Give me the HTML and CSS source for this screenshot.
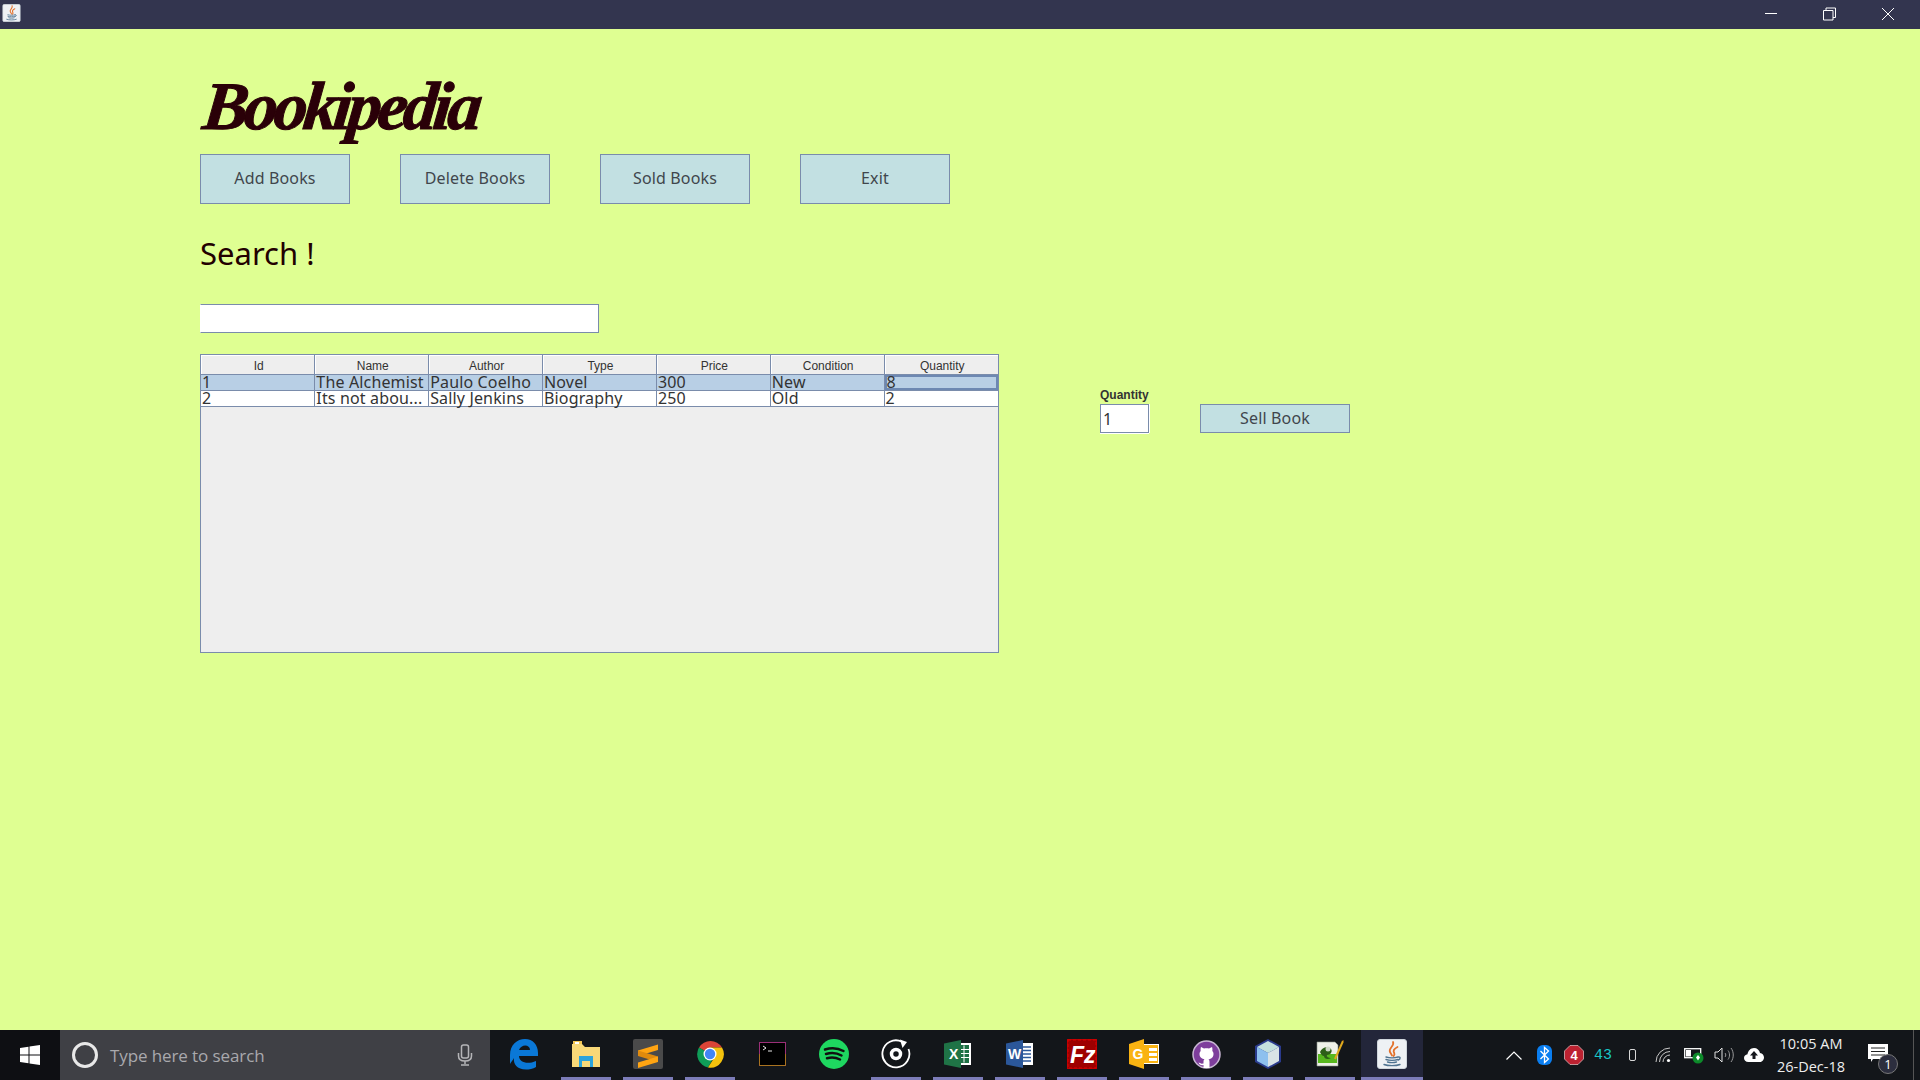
FILE: index.html
```html
<!DOCTYPE html>
<html lang="en">
<head>
<meta charset="utf-8">
<title>Bookipedia</title>
<link rel="stylesheet" href="styles.css">
</head>
<body>
<svg class="defs" width="0" height="0" aria-hidden="true">
  <symbol id="java" viewBox="0 0 30 30">
    <rect x="0.5" y="0.5" width="29" height="29" rx="2.5" fill="#eef1f4" stroke="#cfd6dc"/>
    <path d="M16 3c2 4-5 6-3 10 .5 1 1.500 2 2 3.500M20.500 8c-4 2-4.500 4-3.300 6 .5 1 .3 2-.5 3" fill="none" stroke="#e2702a" stroke-width="1.800" stroke-linecap="round"/>
    <path d="M9 18c3 1 9 1 12 0M9 20.500c3 1 9 1 12 0M10.500 23c3 .8 6 .8 9 0M7 25.500c4 1.500 12 1.500 16 0M21 18c2.500-.5 3 2 .3 3" fill="none" stroke="#4f7390" stroke-width="1.400" stroke-linecap="round"/>
  </symbol>
</svg>

<header class="titlebar">
  <svg class="app-icon" width="19" height="18"><use href="#java"/></svg>
  <div class="win-controls">
    <svg class="win-btn" width="59" height="29" viewBox="0 0 59 29"><path d="M24 13.500h12" stroke="#fff" fill="none"/></svg>
    <svg class="win-btn" width="59" height="29" viewBox="0 0 59 29"><path d="M23.500 10.500h9.500v9.500h-9.500zM26 10.500v-2.500h9.500v9.500h-2.500" stroke="#fff" fill="none"/></svg>
    <svg class="win-btn" width="59" height="29" viewBox="0 0 59 29"><path d="M23 8l12 12M35 8l-12 12" stroke="#fff" fill="none"/></svg>
  </div>
</header>

<main class="app">
  <div class="brand"><h1 class="brand-text">Bookipedia</h1></div>
  <nav class="actions">
    <button class="btn btn-lg">Add Books</button>
    <button class="btn btn-lg">Delete Books</button>
    <button class="btn btn-lg">Sold Books</button>
    <button class="btn btn-lg">Exit</button>
  </nav>
  <h2 class="search-title">Search !</h2>
  <input class="search-input" type="text" aria-label="Search">
  <section class="work">
    <div class="table-wrap">
      <table class="books">
        <thead>
          <tr><th>Id</th><th>Name</th><th>Author</th><th>Type</th><th>Price</th><th>Condition</th><th>Quantity</th></tr>
        </thead>
        <tbody>
          <tr class="selected"><td>1</td><td>The Alchemist</td><td>Paulo Coelho</td><td>Novel</td><td>300</td><td>New</td><td class="focus">8</td></tr>
          <tr><td>2</td><td>Its not abou...</td><td>Sally Jenkins</td><td>Biography</td><td>250</td><td>Old</td><td>2</td></tr>
        </tbody>
      </table>
    </div>
    <aside class="sell">
      <label class="qty-label" for="qty">Quantity</label>
      <div class="sell-row">
        <input class="qty-input" id="qty" type="text" value="1">
        <button class="btn btn-sm">Sell Book</button>
      </div>
    </aside>
  </section>
</main>

<footer class="taskbar">
  <div class="start">
    <svg width="20" height="20" viewBox="0 0 20 20"><path d="M0 3l8.500-1.200v7.700H0zM9.500 1.600L20 0v9.500H9.500zM0 10.500h8.500v7.700L0 17zM9.500 10.500H20V20L9.500 18.400z" fill="#fff"/></svg>
  </div>
  <div class="searchbox">
    <svg class="cortana" width="28" height="28" viewBox="0 0 28 28"><circle cx="14" cy="14" r="11.500" fill="none" stroke="#e8e8e8" stroke-width="3"/></svg>
    <span class="search-hint">Type here to search</span>
    <svg class="mic" width="16" height="22" viewBox="0 0 16 22"><rect x="4.500" y="1" width="7" height="13" rx="2" fill="none" stroke="#b5b5b8" stroke-width="1.500"/><path d="M1.500 9v3c0 3 2.500 5 6.500 5s6.500-2 6.500-5V9M8 17v3M4 21h8" fill="none" stroke="#b5b5b8" stroke-width="1.500"/></svg>
  </div>
  <div class="apps">
    <div class="slot">
      <svg width="30" height="32" viewBox="0 0 30 32"><path d="M1 17C1 7 8 1 16 1c8 0 13 6 13 14v3H10c0 6 8 9 17 5v6c-3 2-7 2.500-10 2.500C8 31.500 4 26 5 20 4 22 2 24 1 26zM10 12h11c0-6-9-6-11 0z" fill="#0a78d7"/></svg>
    </div>
    <div class="slot on">
      <svg width="28" height="26" viewBox="0 0 28 26"><path d="M0 3h10l3 3h15v20H0z" fill="#f8d878"/><path d="M1 0h9v3H1z" fill="#f3c653"/><path d="M3 1h4v2H3z" fill="#fff"/><path d="M7 15h14v11h-3v-6h-8v6H7z" fill="#2ba3dc"/></svg>
    </div>
    <div class="slot on">
      <svg width="30" height="30" viewBox="0 0 30 30"><rect width="30" height="30" rx="2" fill="#4a4a4a"/><path d="M5 11.500L25 5.500V11L5 17z" fill="#ffa412"/><path d="M5 11.500L25 17.500V23L5 17z" fill="#e08a0c"/><path d="M25 17.500V23L5 29V23.500z" fill="#ffa412"/></svg>
    </div>
    <div class="slot on">
      <svg width="28" height="28" viewBox="0 0 28 28"><path d="M14 14L3 7.500A13.500 13.500 0 0 1 26 7.500H14z" fill="#db4437"/><path d="M14 14L3 7.500A13.500 13.500 0 0 0 12 27.500L18 17z" fill="#0f9d58"/><path d="M14 7.500h12A13.500 13.500 0 0 1 12 27.500l7-11z" fill="#f4c20d"/><circle cx="14" cy="14" r="6.500" fill="#fff"/><circle cx="14" cy="14" r="5.200" fill="#4285f4"/></svg>
    </div>
    <div class="slot">
      <svg width="27" height="24" viewBox="0 0 27 24"><rect x="0.500" y="0.500" width="26" height="23" fill="#000" stroke="#9b2f77"/><path d="M0.500 12v11.500h26V12" fill="none" stroke="#a97320"/><path d="M4 4l3 2-3 2M9 9h4" fill="none" stroke="#e8e8e8"/></svg>
    </div>
    <div class="slot">
      <svg width="30" height="30" viewBox="0 0 30 30"><circle cx="15" cy="15" r="15" fill="#1ed760"/><path d="M6 10.500c6-2 13-1.500 18.500 1.500M7 15c5-1.500 11-1 15.500 1.500M8 19.300c4.500-1.200 9-.8 13 1.200" fill="none" stroke="#111" stroke-width="2.500" stroke-linecap="round"/></svg>
    </div>
    <div class="slot on">
      <svg width="30" height="30" viewBox="0 0 30 30"><path d="M21 2.800A13.500 13.500 0 1 0 27.500 10" fill="none" stroke="#fff" stroke-width="1.800"/><path d="M19 .5l7 2.500-4.500 6z" fill="#fff"/><circle cx="15" cy="15" r="4.500" fill="none" stroke="#fff" stroke-width="3.500"/></svg>
    </div>
    <div class="slot on">
      <svg width="28" height="28" viewBox="0 0 28 28"><path d="M14 3h13v22H14z" fill="#fff"/><path d="M16 5h9v18h-9z" fill="#1d7044"/><path d="M20 5.500v17M16 9.500h9M16 13.500h9M16 17.500h9" stroke="#fff" fill="none"/><path d="M0 3.500L17 0v28L0 24.500z" fill="#1f7346"/><text class="logo-letter" x="5" y="19" fill="#fff">X</text></svg>
    </div>
    <div class="slot on">
      <svg width="28" height="28" viewBox="0 0 28 28"><path d="M14 3h13v22H14z" fill="#fff"/><path d="M17 7h8M17 10.500h8M17 14h8M17 17.500h8M17 21h8" stroke="#2b579a" stroke-width="1.500" fill="none"/><path d="M0 3.500L17 0v28L0 24.500z" fill="#2b579a"/><text class="logo-letter" x="2" y="19" fill="#fff">W</text></svg>
    </div>
    <div class="slot on">
      <svg width="30" height="30" viewBox="0 0 30 30"><rect width="30" height="30" fill="#bf0000"/><path d="M1 1h28v28H1z" fill="#9e0000" stroke="#d80000" stroke-dasharray="3 2"/><text class="logo-fz" x="3" y="24" fill="#fff">Fz</text></svg>
    </div>
    <div class="slot on">
      <svg width="30" height="30" viewBox="0 0 30 30"><path d="M13 5h17v20H13z" fill="#fff"/><path d="M14 6h15v18H14z" fill="#f9b312"/><path d="M20 9h8v3h-8zM20 14h8v3h-8zM20 19h8v3h-8z" fill="#fff"/><path d="M0 5L15 0v30L0 25z" fill="#f9b312"/><text class="logo-letter" x="3.500" y="20" fill="#fff">G</text></svg>
    </div>
    <div class="slot on">
      <svg width="29" height="29" viewBox="0 0 29 29"><circle cx="14.500" cy="14.500" r="13.500" fill="#7e3e9c" stroke="#c9b8d4" stroke-width="1.500"/><path d="M9 7l3 1.500c1.500-.4 3.500-.4 5 0L20 7c.5 1.500.5 3 .3 4 1 1 1.200 2 1.200 3 0 3.500-2.500 5-5 5.300.7.600 1 1.400 1 2.500V28h-6v-3c-2.500.6-4-.3-5-2.500 1 .2 2 1 3 1.200l2-.2v-2c0-1 .3-1.800 1-2.400-2.500-.3-5-1.800-5-5.100 0-1 .3-2 1.200-3-.2-1-.2-2.500.3-4z" fill="#fff"/></svg>
    </div>
    <div class="slot on">
      <svg width="28" height="30" viewBox="0 0 28 30"><path d="M14 0L27 7v16l-13 7-13-7V7z" fill="#2a3a8c"/><path d="M14 2L25 8 14 14 3 8z" fill="#c4e0de"/><path d="M3 8l11 6v14L3 22z" fill="#8ec0ee"/><path d="M25 8L14 14v14l11-6z" fill="#d8e2e6"/></svg>
    </div>
    <div class="slot on">
      <svg width="28" height="28" viewBox="0 0 28 28"><path d="M1 2h18l3 3v21H1z" fill="#eef0e8" stroke="#8c9488" stroke-width=".6"/><path d="M2 14h19v9H2z" fill="#58b81f"/><path d="M4 12c2-5 8-6 11-3 2 3-1 6-4 6-1 2 2 3 4 3-3 2-7 1-7-2-2 0-3-2-4-4z" fill="#2d5f18"/><circle cx="12" cy="9" r="2.500" fill="#cfd8c8"/><path d="M19 19L27 1" stroke="#e0a91d" stroke-width="2"/><path d="M27 1l1-1" stroke="#70480f" stroke-width="2"/></svg>
    </div>
    <div class="slot on active">
      <svg width="30" height="30"><use href="#java"/></svg>
    </div>
  </div>
  <div class="tray">
    <div class="tray-item"><svg width="16" height="9" viewBox="0 0 16 9"><path d="M.5 8.500L8 1l7.500 7.500" fill="none" stroke="#fff" stroke-width="1.200"/></svg></div>
    <div class="tray-item"><svg width="15" height="20" viewBox="0 0 15 20"><rect width="15" height="20" rx="6" fill="#0a7ef0"/><path d="M3.500 6l8 8L7.500 17.500v-15L11.500 6l-8 8" fill="none" stroke="#fff" stroke-width="1.300"/></svg></div>
    <div class="tray-item"><svg width="20" height="20" viewBox="0 0 20 20"><path d="M6 .5h8L19.500 6v8L14 19.500H6L.5 14V6z" fill="#bd2231" stroke="#e8c8c8" stroke-width=".7"/><text class="stop-num" x="10" y="15" fill="#fff">4</text></svg></div>
    <div class="tray-item tray-temp">43</div>
    <div class="tray-item"><svg width="7" height="12" viewBox="0 0 7 12"><rect x=".5" y=".5" width="6" height="11" rx="1.500" fill="none" stroke="#d8d8d8"/></svg></div>
    <div class="tray-item tray-wide"><svg width="16" height="16" viewBox="0 0 16 16"><path d="M1 15A14 14 0 0 1 15 1M4.500 15A10.500 10.500 0 0 1 15 4.500M8 15A7 7 0 0 1 15 8" fill="none" stroke="#c8c8c8"/><circle cx="13.500" cy="13.500" r="1.600" fill="#fff"/></svg></div>
    <div class="tray-item"><svg width="20" height="18" viewBox="0 0 20 18"><rect x=".7" y="2.700" width="16" height="9" fill="none" stroke="#fff" stroke-width="1.300"/><rect x="2" y="4" width="5" height="6.500" fill="#fff"/><circle cx="14" cy="12" r="5.500" fill="#0d8a2a"/><path d="M14 9l2 2.500-2 3-2-3z" fill="#fff"/></svg></div>
    <div class="tray-item"><svg width="20" height="16" viewBox="0 0 20 16"><path d="M1 5h3l4-4v14l-4-4H1z" fill="none" stroke="#e0e0e0"/><path d="M11 6c1 1 1 3 0 4M14 3.500c2 2.500 2 6.500 0 9M17 1c3 4 3 10 0 14" fill="none" stroke="#9a9a9a"/></svg></div>
    <div class="tray-item"><svg width="20" height="14" viewBox="0 0 20 14"><path d="M4.500 14C1.500 14 0 12 0 10c0-2 1.500-3.500 3.500-3.700C4 3 6.500 0 10 0c3 0 5.500 2 6 5 2.500.3 4 2.500 4 4.500S18.500 14 16 14z" fill="#fff"/><path d="M10 3l4 4.500h-2.500V11h-3V7.500H6z" fill="#15171c"/></svg></div>
    <div class="clock"><span>10:05 AM</span><span>26-Dec-18</span></div>
    <div class="notify">
      <svg width="20" height="18" viewBox="0 0 20 18"><path d="M0 0h20v15H5l-2 3v-3H0z" fill="#fff"/><path d="M3 4h14M3 7.500h14M3 11h14" stroke="#222" stroke-width="1" fill="none"/></svg>
      <span class="badge">1</span>
    </div>
  </div>
</footer>
</body>
</html>
```

FILE: styles.css
```css
* { box-sizing: border-box; }
html, body { margin: 0; height: 100%; }
body {
  display: flex;
  flex-direction: column;
  height: 1080px;
  overflow: hidden;
  background: #dfff92;
  font-family: "Noto Sans", sans-serif;
  color: #200;
}
.defs { position: absolute; }

/* window title bar */
.titlebar {
  flex: 0 0 29px;
  display: flex;
  align-items: flex-start;
  justify-content: space-between;
  background: #33354f;
  padding: 0 2px;
}
.app-icon { margin-top: 4px; }
.win-controls { display: flex; }
.win-btn { display: block; }

/* application body */
.app {
  flex: 1;
  display: flex;
  flex-direction: column;
  padding-left: 200px;
}
.brand {
  height: 125px;
  display: flex;
  align-items: flex-end;
}
.brand-text {
  margin: 0 0 13px;
  font-family: "Liberation Serif", serif;
  font-style: italic;
  font-weight: 700;
  font-size: 68px;
  line-height: 70px;
  letter-spacing: -4.3px;
  color: #2a0008;
  -webkit-text-stroke: 1px #2a0008;
  transform: skewX(-6deg);
  transform-origin: left bottom;
}
.actions { display: flex; gap: 50px; }
.btn {
  background: #c2e0e2;
  border: 1px solid #7a8cab;
  border-radius: 0;
  color: #40464c;
  font-family: "Noto Sans", sans-serif;
  font-size: 16px;
  letter-spacing: .15px;
  padding: 0 0 2px;
}
.btn-lg { width: 150px; height: 50px; }
.btn-sm { width: 150px; height: 29px; padding: 0 0 1px; }
.search-title {
  margin: 28px 0 0;
  font-size: 31px;
  line-height: 42px;
  font-weight: 400;
  color: #200;
}
.search-input {
  margin-top: 30px;
  width: 399px;
  height: 29px;
  background: #fff;
  border: 1px solid #7a8cab;
  border-left-color: #fff;
  outline: none;
}
.work {
  margin-top: 21px;
  display: flex;
  align-items: flex-start;
}
.table-wrap {
  width: 799px;
  height: 299px;
  background: #eee;
  border: 1px solid #7a8cab;
}
.books {
  width: 100%;
  table-layout: fixed;
  border-collapse: collapse;
}
.books th {
  height: 19px;
  padding: 3px 0 0 2px;
  background: #eee;
  border: 1px solid #7a8cab;
  border-top: 0;
  font-family: "Liberation Sans", sans-serif;
  font-size: 12px;
  line-height: 14px;
  font-weight: 400;
  color: #333;
  box-shadow: inset 1px 1px 0 #fff;
}
.books th:first-child { border-left: 0; }
.books th:last-child { border-right: 0; }
.books td {
  height: 16px;
  padding: 0 1px;
  background: #fff;
  border: 1px solid #7a8cab;
  font-size: 16px;
  line-height: 14px;
  letter-spacing: .15px;
  color: #333;
  white-space: nowrap;
}
.books td:first-child { border-left: 0; }
.books td:last-child { border-right: 0; }
.books .selected td { background: #b8cfe5; }
.books .selected .focus { box-shadow: inset 0 0 0 2px #6d88b2; padding-left: 2px; }
.sell {
  margin: 34px 0 0 101px;
  display: flex;
  flex-direction: column;
}
.qty-label {
  font-family: "Liberation Sans", sans-serif;
  font-size: 12px;
  line-height: 15px;
  font-weight: 700;
  color: #333;
}
.sell-row { display: flex; gap: 51px; margin-top: 1px; }
.qty-input {
  width: 49px;
  height: 29px;
  padding: 0 0 0 2px;
  background: #fff;
  border: 1px solid #7a8cab;
  box-shadow: 0 1px 0 #fff, 1px 0 0 #fff;
  outline: none;
  font-family: "Noto Sans", sans-serif;
  font-size: 16px;
  color: #333;
}

/* windows taskbar */
.taskbar {
  flex: 0 0 50px;
  display: flex;
  align-items: stretch;
  background: #13161a;
  color: #fff;
}
.start {
  flex: 0 0 60px;
  display: flex;
  align-items: center;
  justify-content: center;
  background: #0e0f13;
}
.searchbox {
  flex: 0 0 430px;
  display: flex;
  align-items: center;
  padding: 0 17px 0 11px;
  background: #3f4045;
}
.search-hint {
  flex: 1;
  margin-left: 11px;
  font-family: "Open Sans", sans-serif;
  font-size: 17px;
  letter-spacing: -.1px;
  color: #a9a9ad;
}
.apps {
  display: flex;
  padding-left: 3px;
}
.slot {
  position: relative;
  width: 62px;
  display: flex;
  align-items: center;
  justify-content: center;
  padding-bottom: 2px;
}
.slot.on::after {
  content: "";
  position: absolute;
  left: 6px;
  right: 6px;
  bottom: 0;
  height: 3px;
  background: #7c7cb8;
}
.slot.active { background: #23263a; }
.slot.active::after { left: 0; right: 0; }
.logo-letter {
  font-family: "Liberation Sans", sans-serif;
  font-size: 14px;
  font-weight: 700;
}
.logo-fz {
  font-family: "Liberation Sans", sans-serif;
  font-size: 23px;
  font-weight: 700;
  font-style: italic;
}
.stop-num {
  font-family: "Liberation Sans", sans-serif;
  font-size: 13px;
  font-weight: 700;
  text-anchor: middle;
}
.tray {
  margin-left: auto;
  display: flex;
  padding-right: 6px;
}
.tray-item {
  width: 30px;
  display: flex;
  align-items: center;
  justify-content: center;
}
.tray-temp {
  width: 28px;
  font-family: "Liberation Mono", monospace;
  font-size: 15px;
  color: #19c7c7;
}
.tray-wide { width: 32px; }
.clock {
  width: 84px;
  display: flex;
  flex-direction: column;
  justify-content: center;
  align-items: center;
  font-family: "Open Sans", sans-serif;
  font-size: 14.500px;
  line-height: 23px;
  color: #eee;
}
.notify {
  position: relative;
  width: 61px;
  display: flex;
  align-items: center;
  justify-content: center;
  padding: 0 10px 4px 0;
  border-right: 1px solid #555;
}
.badge {
  position: absolute;
  left: 25px;
  top: 24px;
  width: 20px;
  height: 20px;
  border-radius: 50%;
  background: #2c2e3e;
  border: 1px solid #777;
  font-family: "Open Sans", sans-serif;
  font-size: 13px;
  line-height: 18px;
  text-align: center;
  color: #fff;
}
```
